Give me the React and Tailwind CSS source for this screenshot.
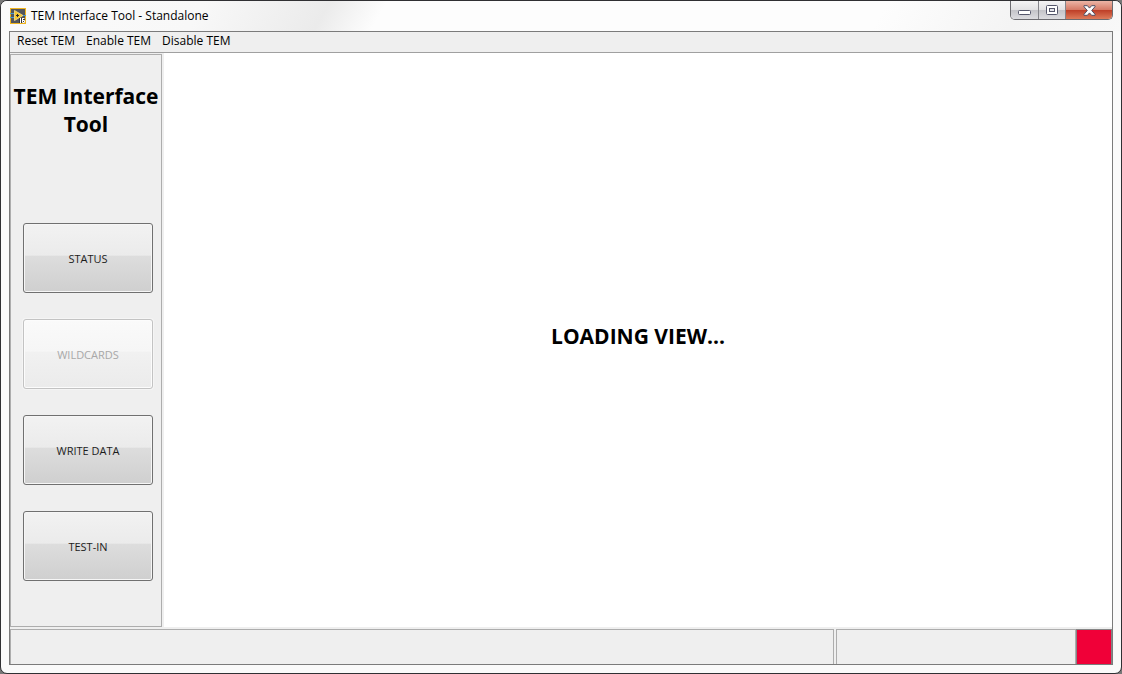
import React from "react";

const views = [
  { label: "STATUS" },
  { label: "WILDCARDS", disabled: true },
  { label: "WRITE DATA" },
  { label: "TEST-IN" },
];

const menus = ["Reset TEM", "Enable TEM", "Disable TEM"];

function AppIcon() {
  return (
    <svg width="16" height="16" viewBox="0 0 16 16" aria-hidden="true" className="shrink-0">
      <rect width="16" height="16" fill="#f0b41c" />
      <rect x="1" y="1" width="14" height="14" fill="#54565b" />
      <path d="M0 5.5h5M0 9.5h5M12 7.5h4" stroke="#4a9ad0" strokeWidth="1.2" />
      <path d="M4.5 2.5v10L13 7.5z" fill="#f6c62d" stroke="#fbe08a" strokeWidth="0.8" />
      <path d="M6 7.5h3M7.5 6v3" stroke="#27272b" strokeWidth="1" />
      <path d="M9 15v-5h6v5z" fill="#35363b" />
      <path d="M10.5 10v5M12.5 10v4.5h2v-2h-2M12.5 10.5h2" fill="none" stroke="#fff" strokeWidth="1" />
    </svg>
  );
}

function WindowControls() {
  return (
    <div className="flex h-[19px] overflow-hidden rounded-b-[5px] border border-t-0 border-[#6b6b70]">
      <button aria-label="Minimize" className="flex w-7 items-center justify-center border-r border-[#85858b] bg-[linear-gradient(#f4f4f5_0%,#e2e2e4_48%,#c3c3c8_50%,#dcdce0_100%)]">
        <svg width="13" height="16" viewBox="0 0 13 16" aria-hidden="true">
          <rect x="0.5" y="8.5" width="12" height="4" rx="1" fill="#fff" stroke="#54566b" />
        </svg>
      </button>
      <button aria-label="Maximize" className="flex w-[27px] items-center justify-center border-r border-[#85858b] bg-[linear-gradient(#f4f4f5_0%,#e2e2e4_48%,#c3c3c8_50%,#dcdce0_100%)]">
        <svg width="12" height="10" viewBox="0 0 12 10" aria-hidden="true">
          <rect x="0.5" y="0.5" width="11" height="9" rx="1" fill="#fff" stroke="#54566b" />
          <rect x="3.5" y="3.5" width="5" height="3" fill="#e4e4ea" stroke="#54566b" />
        </svg>
      </button>
      <button aria-label="Close" className="flex w-[46px] items-center justify-center bg-[linear-gradient(#ecb5a6_0%,#d67b67_48%,#bd3d26_50%,#de7b5a_100%)]">
        <svg width="13" height="11" viewBox="0 0 13 11" aria-hidden="true">
          <path
            d="M1 .7h3.4l2.1 2.4L8.6.7H12v1L8.7 5.5 12 9.3v1H8.6L6.5 7.9l-2.1 2.4H1v-1l3.3-3.8L1 1.7z"
            fill="#fff"
            stroke="#4f4f63"
          />
        </svg>
      </button>
    </div>
  );
}

function ViewButton({ label, disabled }) {
  return (
    <button
      disabled={disabled}
      className={
        "h-[70px] w-full rounded-[3px] border pt-[2px] text-[11px] " +
        (disabled
          ? "border-[#c3c3c3] bg-[linear-gradient(#fafafa_0%,#f6f6f6_46%,#f1f1f1_47%,#ebebeb_100%)] text-[#a8a8a8] shadow-[inset_0_0_0_1px_#fcfcfc,0_0_0_1px_#f5f5f5]"
          : "border-[#707070] bg-[linear-gradient(#f2f2f2_0%,#ebebeb_46%,#dddddd_47%,#cfcfcf_100%)] text-[#1c1c1c] shadow-[inset_0_0_0_1px_#f6f6f6]")
      }
    >
      {label}
    </button>
  );
}

export default function App() {
  return (
    <div className="flex min-h-screen bg-[#777] font-['Open_Sans','Noto_Sans',sans-serif] text-black">
      <div className="flex flex-1 flex-col overflow-hidden rounded-[7px] border border-[#303033] bg-[#fafafa]">
        <header className="flex h-[30px] items-start justify-between bg-[linear-gradient(120deg,#fafafa_0%,#f8f8f8_18%,#ebebeb_29%,#fdfdfd_34%,#fdfdfd_78%,#f4f4f4_90%,#f8f8f8_100%)] px-2">
          <div className="flex items-center gap-[5px] pt-[7px] pl-px">
            <AppIcon />
            <h1 className="text-[12px] leading-4 whitespace-nowrap">TEM Interface Tool - Standalone</h1>
          </div>
          <WindowControls />
        </header>

        <div className="mx-2 mb-2 flex flex-1 flex-col border border-[#7b7b7b] bg-[#efefef]">
          <nav className="flex h-[21px] items-center gap-[11px] border-b border-[#a0a0a0] pb-[2px] pl-[7px]">
            {menus.map((m) => (
              <button key={m} className="text-[12px] leading-4 whitespace-nowrap">
                {m}
              </button>
            ))}
          </nav>

          <div className="flex flex-1">
            <aside className="mt-px mr-[2px] flex w-[152px] shrink-0 flex-col border border-[#adadad]">
              <h2 className="mt-[27px] text-center text-[21px] leading-7 font-bold">
                TEM Interface
                <br />
                Tool
              </h2>
              <div className="mt-[85px] flex flex-col gap-[26px] pr-2 pl-3">
                {views.map((v) => (
                  <ViewButton key={v.label} {...v} />
                ))}
              </div>
            </aside>
            <main className="flex flex-1 items-center justify-center bg-white pb-[8px]">
              <p className="text-[21px] leading-7 font-bold">LOADING VIEW...</p>
            </main>
          </div>

          <footer className="mt-[2px] flex h-[35px]">
            <div className="mr-[2px] flex-1 border border-b-0 border-[#adadad]" />
            <div className="w-[240px] border border-b-0 border-[#adadad]" />
            <div className="w-[36px] border border-b-0 border-[#858585] bg-[#f00038]" />
          </footer>
        </div>
      </div>
    </div>
  );
}
